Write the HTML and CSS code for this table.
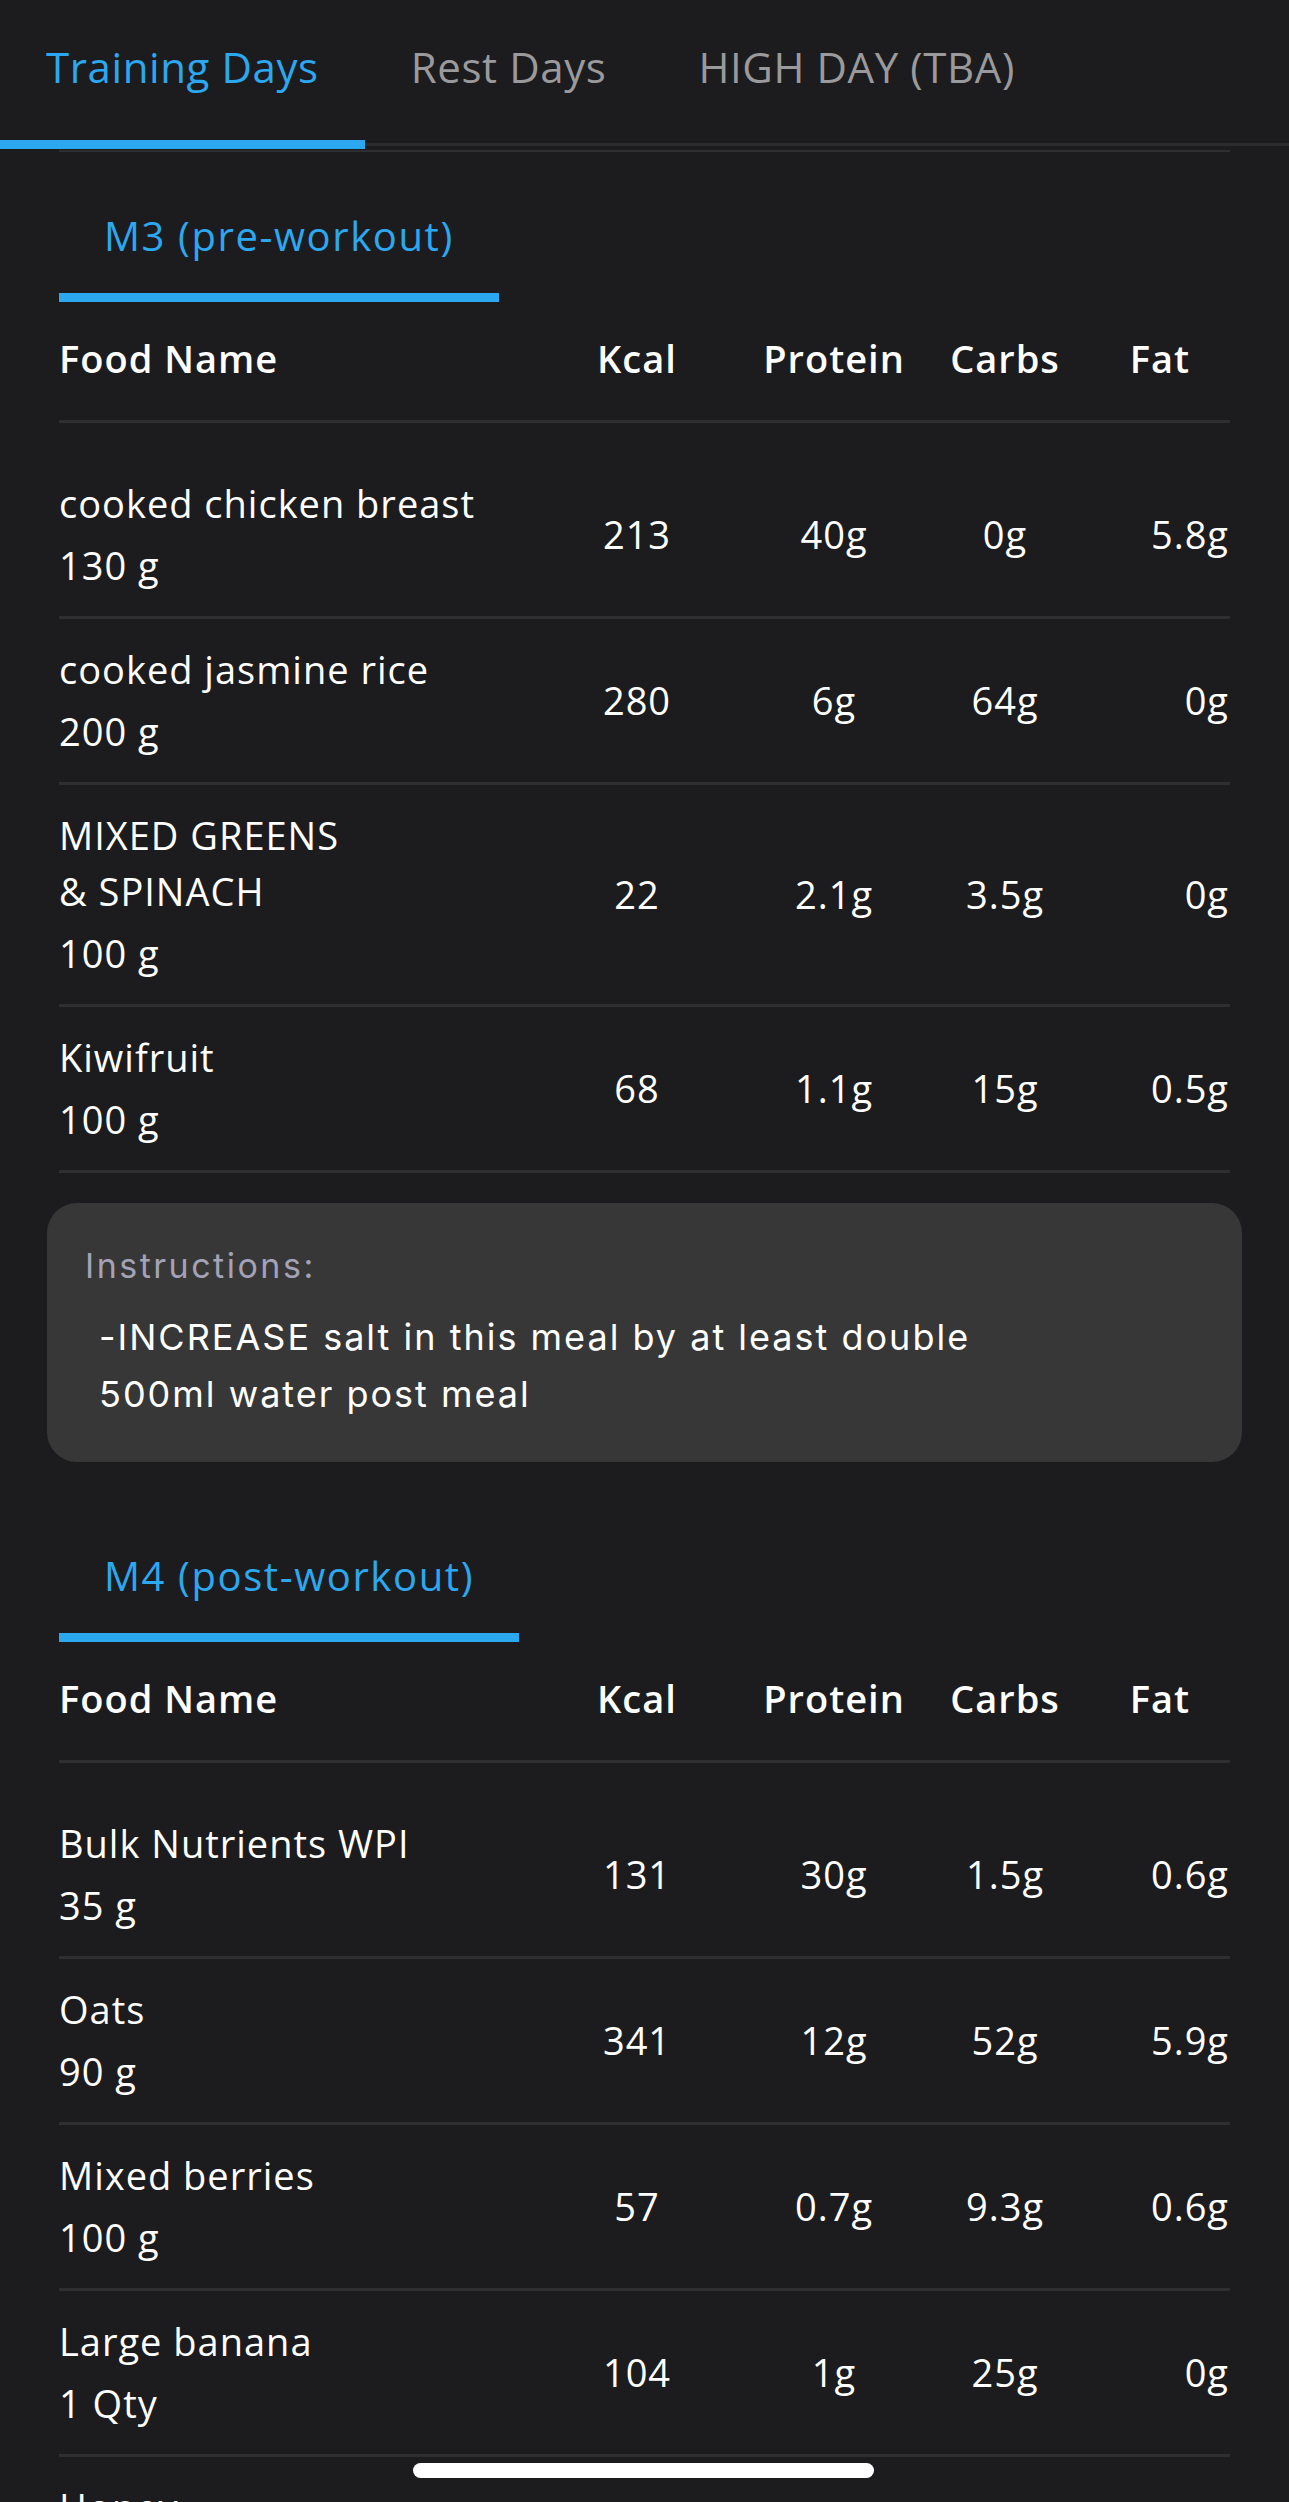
FILE: index.html
```html
<!DOCTYPE html>
<html lang="en">
<head>
    <meta charset="UTF-8">
    <meta name="viewport" content="width=device-width, initial-scale=1.0">
    <title>Meal Plan</title>
    <link rel="stylesheet" href="styles.css">
</head>
<body>
    <div class="tabs">
        <div class="tab active">Training Days</div>
        <div class="tab">Rest Days</div>
        <div class="tab">HIGH DAY (TBA)</div>
    </div>

    <div class="content">
        <section class="meal">
            <div class="meal-tab"><span>M3 (pre-workout)</span></div>
            <div class="food-table">
                <div class="row head">
                    <div class="name">Food Name</div>
                    <div class="num">Kcal</div>
                    <div class="num">Protein</div>
                    <div class="num">Carbs</div>
                    <div class="num fat">Fat</div>
                </div>
                <div class="rows">
                    <div class="row">
                        <div class="name">cooked chicken breast<span class="qty">130 g</span></div>
                        <div class="num">213</div>
                        <div class="num">40g</div>
                        <div class="num">0g</div>
                        <div class="num fat">5.8g</div>
                    </div>
                    <div class="row">
                        <div class="name">cooked jasmine rice<span class="qty">200 g</span></div>
                        <div class="num">280</div>
                        <div class="num">6g</div>
                        <div class="num">64g</div>
                        <div class="num fat">0g</div>
                    </div>
                    <div class="row">
                        <div class="name">MIXED GREENS &amp;&nbsp;SPINACH<span class="qty">100 g</span></div>
                        <div class="num">22</div>
                        <div class="num">2.1g</div>
                        <div class="num">3.5g</div>
                        <div class="num fat">0g</div>
                    </div>
                    <div class="row">
                        <div class="name">Kiwifruit<span class="qty">100 g</span></div>
                        <div class="num">68</div>
                        <div class="num">1.1g</div>
                        <div class="num">15g</div>
                        <div class="num fat">0.5g</div>
                    </div>
                </div>
            </div>
            <div class="instructions">
                <div class="label">Instructions:</div>
                <p>-INCREASE salt in this meal by at least double<br>500ml water post meal</p>
            </div>
        </section>

        <section class="meal">
            <div class="meal-tab"><span>M4 (post-workout)</span></div>
            <div class="food-table">
                <div class="row head">
                    <div class="name">Food Name</div>
                    <div class="num">Kcal</div>
                    <div class="num">Protein</div>
                    <div class="num">Carbs</div>
                    <div class="num fat">Fat</div>
                </div>
                <div class="rows">
                    <div class="row">
                        <div class="name">Bulk Nutrients WPI<span class="qty">35 g</span></div>
                        <div class="num">131</div>
                        <div class="num">30g</div>
                        <div class="num">1.5g</div>
                        <div class="num fat">0.6g</div>
                    </div>
                    <div class="row">
                        <div class="name">Oats<span class="qty">90 g</span></div>
                        <div class="num">341</div>
                        <div class="num">12g</div>
                        <div class="num">52g</div>
                        <div class="num fat">5.9g</div>
                    </div>
                    <div class="row">
                        <div class="name">Mixed berries<span class="qty">100 g</span></div>
                        <div class="num">57</div>
                        <div class="num">0.7g</div>
                        <div class="num">9.3g</div>
                        <div class="num fat">0.6g</div>
                    </div>
                    <div class="row">
                        <div class="name">Large banana<span class="qty">1 Qty</span></div>
                        <div class="num">104</div>
                        <div class="num">1g</div>
                        <div class="num">25g</div>
                        <div class="num fat">0g</div>
                    </div>
                    <div class="row">
                        <div class="name">Honey<span class="qty">20 g</span></div>
                        <div class="num">61</div>
                        <div class="num">0g</div>
                        <div class="num">16g</div>
                        <div class="num fat">0g</div>
                    </div>
                </div>
            </div>
        </section>
    </div>

    <div class="home-indicator"></div>
</body>
</html>
```

FILE: styles.css
```css
body {
    margin: 0;
    height: 2502px;
    overflow: hidden;
    background-color: #1c1c1e;
    color: #ffffff;
    font-family: "Open Sans", Lato, sans-serif;
}
.tabs {
    display: flex;
    background: linear-gradient(#2c2c2e, #2c2c2e) left bottom 3px / 100% 3px no-repeat;
}
.tab {
    padding: 41px 46px 47px;
    font-size: 42px;
    line-height: 52px;
    letter-spacing: 0.6px;
    color: #9a9a9c;
    border-bottom: 9px solid transparent;
}
.tab.active {
    color: #2ba8ef;
    border-bottom-color: #2ba8ef;
}
.content {
    margin: 1px 59px 0;
    border-top: 2px solid #2f2f31;
}
.meal {
    padding-top: 58px;
}
.meal-tab span {
    display: inline-block;
    padding: 0 45px 31px;
    font-size: 40px;
    line-height: 52px;
    letter-spacing: 1.6px;
    color: #2ba8ef;
    border-bottom: 9px solid #2ba8ef;
}
.row {
    display: grid;
    grid-template-columns: 506px 144px 250px 92px 178px;
    align-items: center;
    padding: 22px 0 23px;
    border-bottom: 3px solid #2f2f31;
    font-size: 38px;
    line-height: 56px;
    letter-spacing: 1px;
}
.row.head {
    padding: 28px 0 34px;
    font-weight: 600;
}
.rows {
    padding-top: 30px;
}
.name {
    max-width: 470px;
}
.name .qty {
    display: block;
    margin-top: 6px;
}
.num {
    display: flex;
    justify-content: center;
    white-space: nowrap;
}
.num.fat {
    justify-content: flex-end;
}
.head .num.fat {
    padding-right: 39px;
}
.instructions {
    margin: 30px -12px;
    padding: 39px 38px;
    background: #373737;
    border-radius: 30px;
    font-family: Inter, sans-serif;
}
.instructions .label {
    font-size: 34px;
    line-height: 48px;
    letter-spacing: 2.5px;
    color: #a3a2b6;
}
.instructions p {
    margin: 19px 0 0 14px;
    font-size: 36px;
    line-height: 57px;
    letter-spacing: 2px;
}
.home-indicator {
    position: fixed;
    left: 413px;
    bottom: 24px;
    width: 461px;
    height: 15px;
    border-radius: 8px;
    background: #ffffff;
}
```
